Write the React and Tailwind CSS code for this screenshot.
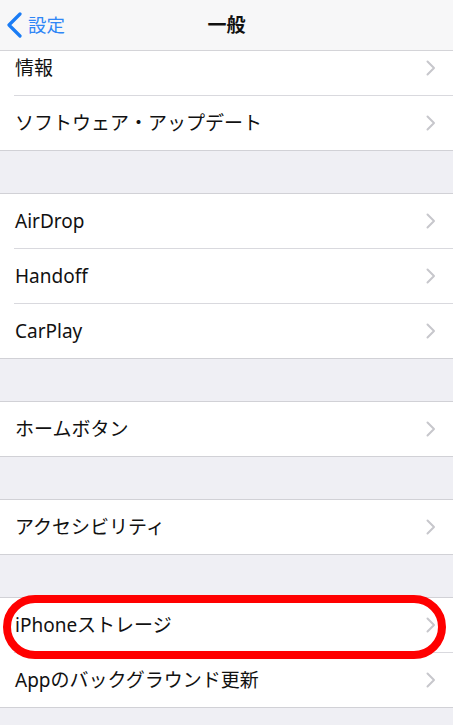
/**
 * App.jsx — iOS "一般" settings screen (scrolled), with the storage row ringed in red.
 */

const groups = [
  ['情報', 'ソフトウェア・アップデート'],
  ['AirDrop', 'Handoff', 'CarPlay'],
  ['ホームボタン'],
  ['アクセシビリティ'],
  ['iPhoneストレージ', 'Appのバックグラウンド更新'],
]

const font = { fontFamily: '"Noto Sans", "Noto Sans CJK JP", sans-serif' }

function Chevron() {
  return (
    <svg width="10" height="16" viewBox="0 0 10 16" className="shrink-0">
      <path d="M1.5 1.5 L8 8 L1.5 14.5" fill="none" stroke="#c7c7cc" strokeWidth="2" strokeLinecap="round" strokeLinejoin="round" />
    </svg>
  )
}

function Row({ label, circled }) {
  return (
    <div className="relative h-[54px] flex items-center justify-between pl-[15px] pr-[17px] bg-white">
      <span className="text-[19px] leading-none text-[#111]">{label}</span>
      <Chevron />
      {/* red marker drawn over the row */}
      {circled && (
        <div className="absolute left-[3px] right-[7px] top-[-3px] h-[64px] rounded-full border-[8px] border-[#ff0000] z-10" />
      )}
    </div>
  )
}

function Group({ items }) {
  return (
    <div className="bg-white border-y border-[#d1d1d6]">
      {items.map((label, i) => (
        <div key={label}>
          {i > 0 && <div className="ml-[14px] h-px bg-[#d9d9de]" />}
          <Row label={label} circled={label === 'iPhoneストレージ'} />
        </div>
      ))}
    </div>
  )
}

export default function App() {
  return (
    <div className="w-[453px] h-[725px] overflow-hidden flex flex-col bg-[#efeff4]" style={font}>
      <header className="relative z-20 h-[51px] shrink-0 flex items-center justify-center bg-[#f7f7f8] border-b border-[#d4d4d8]">
        <div className="absolute left-[6px] top-0 h-[50px] flex items-center gap-[5px]">
          <svg width="17" height="26" viewBox="0 0 17 26">
            <path d="M14 2 L3 13 L14 24" fill="none" stroke="#1a7cf5" strokeWidth="3.2" strokeLinecap="round" strokeLinejoin="round" />
          </svg>
          <span className="text-[18.5px] text-[#2f86f6]">設定</span>
        </div>
        <h1 className="text-[19px] font-bold text-[#111]">一般</h1>
      </header>

      <div className="flex-1 overflow-hidden">
        <div className="-mt-[11px] flex flex-col gap-[42px]">
          {groups.map((items) => (
            <Group key={items[0]} items={items} />
          ))}
        </div>
      </div>
    </div>
  )
}
